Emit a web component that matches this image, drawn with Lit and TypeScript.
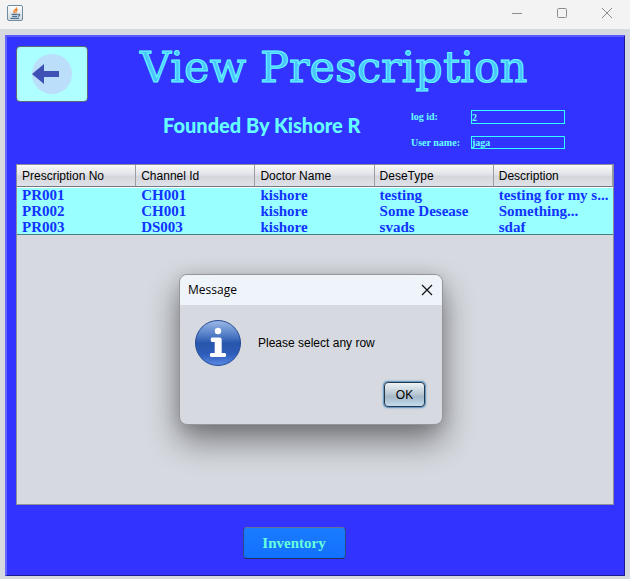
import { LitElement, html, css } from "lit";
import { customElement } from "lit/decorators.js";

const COLUMNS = ["Prescription No", "Channel Id", "Doctor Name", "DeseType", "Description"];
const ROWS = [
  ["PR001", "CH001", "kishore", "testing", "testing for my s..."],
  ["PR002", "CH001", "kishore", "Some Desease", "Something..."],
  ["PR003", "DS003", "kishore", "svads", "sdaf"],
];

@customElement("app-root")
export class AppRoot extends LitElement {
  static styles = css`
    :host {
      display: flex;
      flex-direction: column;
      min-height: 100vh;
      box-sizing: border-box;
      background: #d6d9df;
      font-family: "Liberation Sans", Arial, sans-serif;
      font-size: 12px;
    }
    * {
      box-sizing: border-box;
    }
    button {
      padding: 0;
      margin: 0;
      border: 0;
      background: none;
      font: inherit;
      color: inherit;
    }
    svg {
      display: block;
    }
    .titlebar {
      display: flex;
      align-items: center;
      justify-content: space-between;
      height: 29px;
      padding: 0 1px 3px 7px;
      background: #f3f3f3;
    }
    .controls {
      display: flex;
    }
    .controls button {
      display: grid;
      place-items: center;
      width: 45px;
      height: 26px;
    }
    .panel {
      position: relative;
      flex: 1;
      display: flex;
      flex-direction: column;
      margin: 6px 5px 3px;
      padding: 9px 10px 16px 9px;
      border: 2px solid;
      border-color: #5a5aff #1b1b8e #1b1b8e #6666ff;
      border-right-width: 1px;
      border-bottom-width: 1px;
      background: #3333ff;
      color: #66ffff;
    }
    .heading {
      display: flex;
      align-items: center;
      gap: 52px;
      height: 56px;
    }
    .back {
      display: grid;
      place-items: center;
      width: 72px;
      height: 56px;
      border: 1px solid #5d6b78;
      border-radius: 4px;
      background: linear-gradient(#aff, #b0ffff);
    }
    h1 {
      margin: 0 0 14px;
      font: 400 43px/44px "DejaVu Serif", serif;
      white-space: nowrap;
      color: #4cc4ff;
      -webkit-text-stroke: 1px #66ffff;
    }
    .details {
      display: flex;
      height: 62px;
      padding: 8px 49px 0 147px;
    }
    h2 {
      flex: 1;
      margin: 0;
      font: 900 20px/30px Lato, sans-serif;
    }
    form {
      display: grid;
      grid-template-columns: 60px 94px;
      grid-template-rows: 14px 13px;
      row-gap: 12px;
      font: bold 10px/14px "Liberation Serif", serif;
    }
    input {
      width: 94px;
      height: 100%;
      margin: 0;
      padding: 0;
      border: 1px solid #33ffff;
      border-radius: 0;
      outline: none;
      background: none;
      font: inherit;
      color: #66ffff;
    }
    .records {
      flex: 1;
      min-height: 340px;
      border: 1px solid #8b8f99;
      background: #d6d9df;
    }
    table {
      width: 100%;
      table-layout: fixed;
      border-collapse: separate;
      border-spacing: 0;
      color: #1133ff;
    }
    th {
      height: 22px;
      padding: 0 0 0 5px;
      border-right: 1px solid #9a9da5;
      border-bottom: 1px solid #74777f;
      background: linear-gradient(#fafafa, #e2e3e8 45%, #d4d6dc 55%, #dfe2e8);
      font-weight: 400;
      text-align: left;
      color: #000;
    }
    td {
      height: 16px;
      padding: 0 0 0 5px;
      background: #99ffff;
      font: bold 15px/16px "Liberation Serif", serif;
      white-space: nowrap;
    }
    tbody tr:first-child td {
      box-shadow: inset 0 1px #fff;
    }
    tbody tr:last-child td {
      box-shadow: inset 0 -1px #4a8080;
    }
    .inventory {
      align-self: center;
      width: 103px;
      height: 32px;
      margin: 22px 42px 0 0;
      border: 1px solid;
      border-color: #666f98 #2d4a88 #20305c;
      border-radius: 4px;
      background: linear-gradient(#1a7cff, #1270ff);
      font: bold 15px/16px "Liberation Serif", serif;
      color: #66ffdd;
    }
    .dialog {
      position: absolute;
      left: 172px;
      top: 237px;
      width: 264px;
      border: 1px solid #94969b;
      border-radius: 8px;
      background: #d6d9df;
      box-shadow: 0 16px 32px rgba(0, 0, 0, 0.45), 0 2px 16px rgba(0, 0, 0, 0.12);
      color: #000;
      overflow: hidden;
    }
    .dialog-title {
      display: flex;
      align-items: center;
      justify-content: space-between;
      height: 30px;
      padding-left: 8px;
      background: #eff4fb;
      font: 12px/16px "Open Sans", sans-serif;
    }
    .dialog-title button {
      display: grid;
      place-items: center;
      width: 30px;
      height: 28px;
    }
    .message {
      display: flex;
      align-items: center;
      gap: 16px;
      padding: 14px 14px 0;
    }
    .message p {
      margin: 0;
    }
    .actions {
      display: flex;
      justify-content: flex-end;
      padding: 15px 17px 17px;
    }
    .ok {
      width: 41px;
      height: 25px;
      border: 1px solid #26394b;
      border-radius: 4px;
      background: linear-gradient(#eef3f6, #bccad5 45%, #a3b8c8 60%, #c4dcee);
      box-shadow: 0 0 0 1px #6b9cc8, 0 0 2px 1px #73a4d1;
    }
  `;

  private javaIcon() {
    return html`<svg width="16" height="16" viewBox="0 0 16 16" aria-hidden="true">
      <defs>
        <linearGradient id="tile" x2="0" y2="1">
          <stop stop-color="#fff" />
          <stop offset="1" stop-color="#cfd9e0" />
        </linearGradient>
      </defs>
      <rect x=".5" y=".5" width="15" height="15" rx="1.5" fill="url(#tile)" stroke="#6f8ba0" />
      <path d="M9.5 2.5C10 4.500 6.500 5 6.800 7L8 8.400M10.600 4.400C8.700 5.300 8.600 6.200 9.300 7.800" fill="none" stroke="#ee7d22" stroke-width="1.2" />
      <path d="M4.5 9.4h6.3M5.2 11.4h5M3.5 13.4h8.6M11 9.3c2.5-.6 2.2 1.5 0 2.1" fill="none" stroke="#4d718e" stroke-width="1.1" />
    </svg>`;
  }

  private infoIcon() {
    return html`<svg width="48" height="48" viewBox="0 0 48 48" aria-hidden="true">
      <defs>
        <linearGradient id="disc" x2="0" y2="1">
          <stop stop-color="#9db9e8" />
          <stop offset=".35" stop-color="#4c78c4" />
          <stop offset=".5" stop-color="#2856ac" />
          <stop offset=".75" stop-color="#2d5dba" />
          <stop offset="1" stop-color="#5b8ae6" />
        </linearGradient>
      </defs>
      <circle cx="24" cy="24" r="22.5" fill="url(#disc)" stroke="#244a94" />
      <circle cx="24" cy="12" r="3.2" fill="#fff" />
      <path d="M18 18.500H25.700Q27.700 18.500 27.700 20.500V34H30.700Q32.200 34 32.200 36T30.700 38H17.300Q15.800 38 15.800 36T17.300 34H20.700V23H18Q16.700 23 16.700 20.800T18 18.500Z" fill="#fff" />
    </svg>`;
  }

  render() {
    return html`
      <header class="titlebar">
        ${this.javaIcon()}
        <div class="controls">
          <button aria-label="Minimize">
            <svg width="10" height="10" viewBox="0 0 10 10"><path d="M0 5.500h10" stroke="#8c8c8c" /></svg>
          </button>
          <button aria-label="Maximize">
            <svg width="10" height="10" viewBox="0 0 10 10"><rect x=".5" y=".5" width="9" height="9" rx="1" fill="none" stroke="#8c8c8c" /></svg>
          </button>
          <button aria-label="Close">
            <svg width="10" height="10" viewBox="0 0 10 10"><path d="M0 0l10 10M10 0L0 10" stroke="#8c8c8c" /></svg>
          </button>
        </div>
      </header>
      <main class="panel">
        <div class="heading">
          <button class="back" aria-label="Back">
            <svg width="40" height="40" viewBox="0 0 40 40">
              <circle cx="20" cy="20" r="20" fill="#bbdefb" />
              <path d="M0 20L12 10v7h15v6H12v7z" fill="#3f51b5" />
            </svg>
          </button>
          <h1>View Prescription</h1>
        </div>
        <div class="details">
          <h2>Founded By Kishore R</h2>
          <form>
            <label for="log-id">log id:</label>
            <input id="log-id" type="text" .value=${"2"} />
            <label for="user-name">User name:</label>
            <input id="user-name" type="text" .value=${"jaga"} />
          </form>
        </div>
        <div class="records">
          <table>
            <thead>
              <tr>${COLUMNS.map((name) => html`<th scope="col">${name}</th>`)}</tr>
            </thead>
            <tbody>
              ${ROWS.map((row) => html`<tr>${row.map((cell) => html`<td>${cell}</td>`)}</tr>`)}
            </tbody>
          </table>
        </div>
        <button class="inventory">Inventory</button>
        <section class="dialog" role="dialog" aria-labelledby="dialog-title">
          <div class="dialog-title">
            <span id="dialog-title">Message</span>
            <button aria-label="Close message">
              <svg width="12" height="12" viewBox="0 0 12 12"><path d="M1 1l10 10M11 1L1 11" stroke="#111" stroke-width="1.200" /></svg>
            </button>
          </div>
          <div class="message">
            ${this.infoIcon()}
            <p>Please select any row</p>
          </div>
          <div class="actions"><button class="ok">OK</button></div>
        </section>
      </main>
    `;
  }
}
